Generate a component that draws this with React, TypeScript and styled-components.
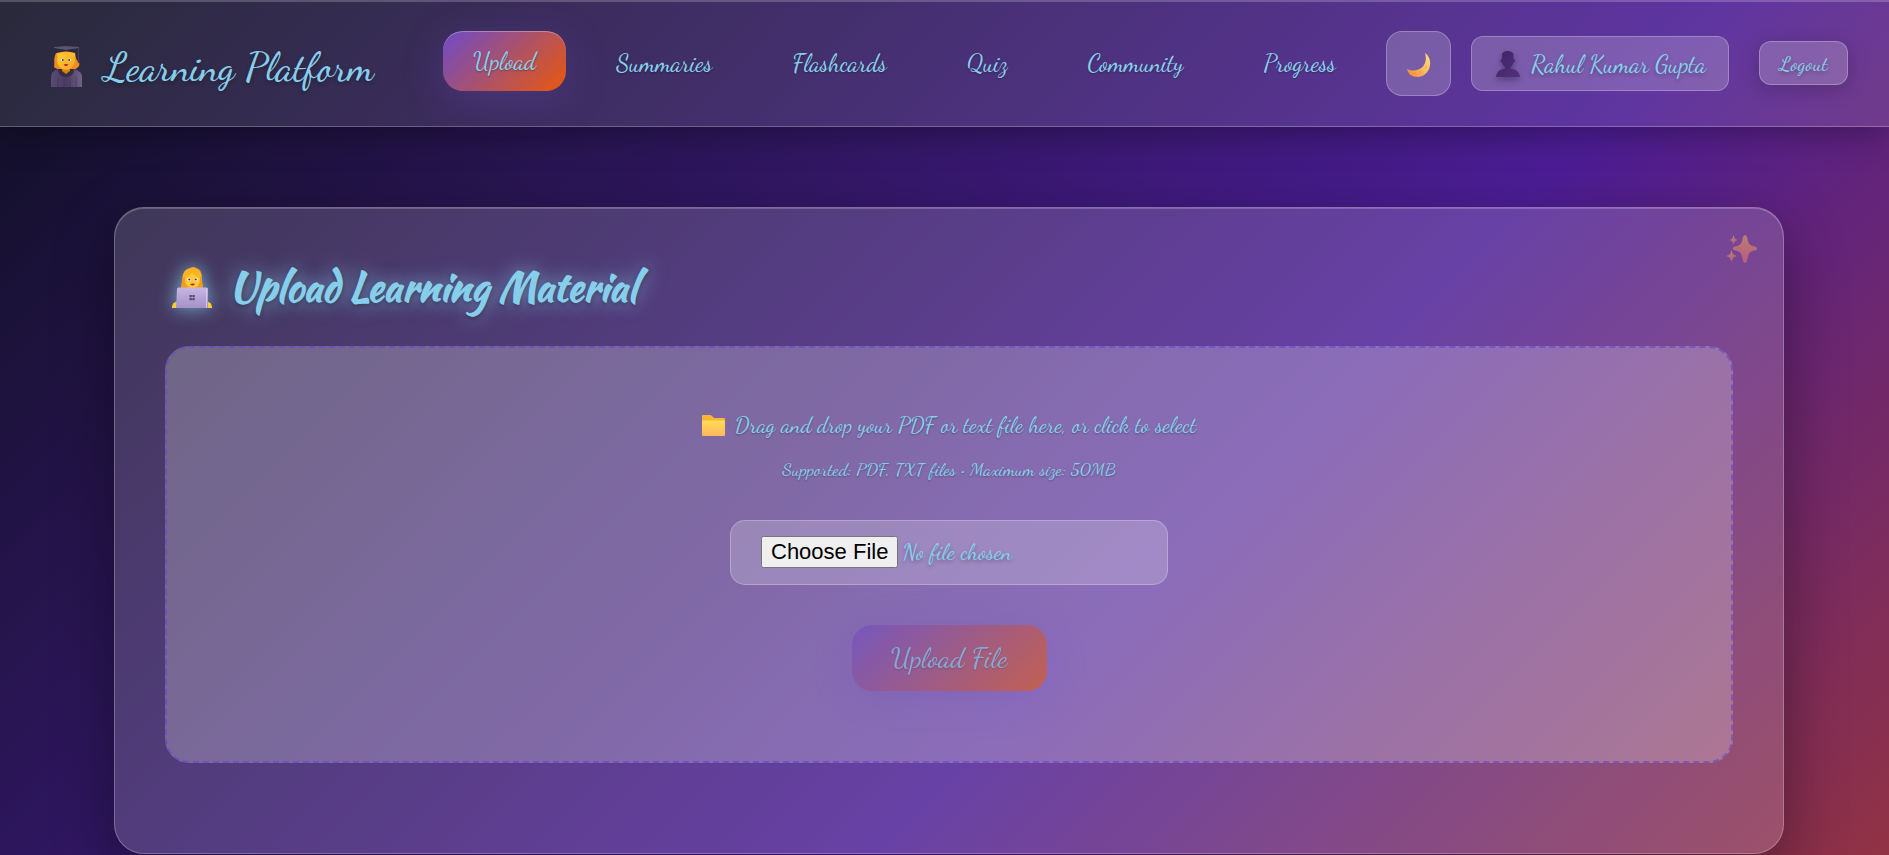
import React from 'react';
import styled, { createGlobalStyle } from 'styled-components';

const SCRIPT = '"Dancing Script", "Liberation Serif", cursive';
const BRUSH = '"Kaushan Script", "Dancing Script", "Liberation Serif", cursive';
const SKY = '#87ceeb';

const GlobalStyle = createGlobalStyle`
  *, *::before, *::after { box-sizing: border-box; }
  html { min-height: 100%; }
  body {
    margin: 0;
    min-height: 100vh;
    font-family: ${SCRIPT};
    font-weight: 500;
    color: ${SKY};
    background: linear-gradient(135deg, #0f0f23 0, #4c1d95 1220px, #c2410c 2440px) no-repeat #0f0f23;
  }
`;

const Page = styled.div`
  min-height: 100vh;
  overflow: hidden;
`;

const Header = styled.header`
  display: flex;
  align-items: center;
  height: 127px;
  padding: 0 41px 0 50px;
  background: rgba(255, 255, 255, 0.11);
  border-bottom: 1px solid rgba(255, 255, 255, 0.25);
  box-shadow: 0 8px 32px rgba(0, 0, 0, 0.3), inset 0 2px 0 rgba(255, 255, 255, 0.2);
`;

const Brand = styled.a`
  display: flex;
  align-items: center;
  gap: 22px;
  flex: 0 0 393px;
  padding-top: 8px;
  color: ${SKY};
  font-size: 40px;
  line-height: 48px;
  text-decoration: none;
  white-space: nowrap;
  text-shadow: 0 2px 4px rgba(0, 0, 0, 0.3);
`;

const Nav = styled.nav`
  display: flex;
  justify-content: space-between;
  flex: 1 1 auto;
`;

const NavLink = styled.a<{ $active?: boolean }>`
  display: flex;
  align-items: center;
  height: 60px;
  padding: 2px 30px 0;
  margin-top: ${(p) => (p.$active ? '-2px' : '0')};
  margin-bottom: ${(p) => (p.$active ? '2px' : '0')};
  border-radius: 20px;
  color: ${SKY};
  font-size: 24px;
  line-height: 30px;
  text-decoration: none;
  text-shadow: 0 1px 2px rgba(0, 0, 0, 0.3);
  background: ${(p) => (p.$active ? 'linear-gradient(135deg, #6d4bc8, #ea580c)' : 'none')};
  box-shadow: ${(p) =>
    p.$active ? '0 8px 40px rgba(109, 75, 200, 0.3), inset 0 1px 0 rgba(255, 255, 255, 0.3)' : 'none'};
`;

const Actions = styled.div`
  display: flex;
  align-items: center;
  margin-left: 20px;
`;

const glass = `
  background: rgba(255, 255, 255, 0.2);
  border: 1px solid rgba(255, 255, 255, 0.25);
  color: ${SKY};
  font-family: ${SCRIPT};
  font-weight: 500;
  text-shadow: 0 2px 4px rgba(0, 0, 0, 0.3);
`;

const ThemeButton = styled.button`
  ${glass}
  display: grid;
  place-items: center;
  width: 65px;
  height: 65px;
  padding: 4px 0 0;
  border-radius: 16px;
`;

const UserBadge = styled.div`
  ${glass}
  display: flex;
  align-items: center;
  justify-content: center;
  gap: 11px;
  width: 258px;
  height: 55px;
  margin-left: 20px;
  padding: 3px 0 0 2px;
  border-radius: 12px;
  font-size: 24px;
  line-height: 30px;
  white-space: nowrap;

  svg {
    margin-bottom: 2px;
    filter: drop-shadow(0 3px 3px rgba(0, 0, 0, 0.3));
  }
`;

const LogoutButton = styled.button`
  ${glass}
  width: 89px;
  height: 44px;
  margin-left: 30px;
  padding: 2px 0 0;
  border-radius: 12px;
  font-size: 20px;
  line-height: 24px;
  box-shadow: 0 4px 20px rgba(0, 0, 0, 0.2);
`;

const Main = styled.main`
  padding: 80px 105px 1px 114px;
`;

const Card = styled.section`
  position: relative;
  padding: 50px 50px 90px;
  border: 1px solid rgba(255, 255, 255, 0.25);
  border-radius: 30px;
  background: rgba(255, 255, 255, 0.16);
  box-shadow: 0 20px 60px rgba(0, 0, 0, 0.4), inset 0 1px 0 rgba(255, 255, 255, 0.2);
`;

const Sparkle = styled.span`
  position: absolute;
  top: 27px;
  right: 26px;
  opacity: 0.6;
`;

const Title = styled.h1`
  display: flex;
  align-items: center;
  gap: 17px;
  margin: 0 0 30px;
  padding-left: 7px;
  font-family: ${BRUSH};
  font-size: 40px;
  font-weight: 700;
  line-height: 58px;
  white-space: nowrap;
  text-shadow: 0 2px 4px rgba(0, 0, 0, 0.3), 0 0 20px rgba(135, 206, 235, 0.7);

  svg { filter: drop-shadow(0 0 9px rgba(135, 206, 235, 0.8)); }
`;

const DropZone = styled.form`
  display: flex;
  flex-direction: column;
  align-items: center;
  height: 417px;
  padding-top: 59px;
  border: 2px dashed rgba(109, 75, 200, 0.7);
  border-radius: 24px;
  background: rgba(255, 255, 255, 0.23);
`;

const Hint = styled.label`
  display: flex;
  align-items: center;
  gap: 10px;
  font-size: 22px;
  line-height: 36px;
  text-shadow: 0 1px 2px rgba(0, 0, 0, 0.3);
`;

const Limits = styled.p`
  margin: 11px 0 0;
  font-size: 18px;
  line-height: 30px;
  text-shadow: 0 1px 2px rgba(0, 0, 0, 0.3);
`;

const FileInput = styled.input`
  ${glass}
  width: 438px;
  height: 65px;
  margin-top: 36px;
  padding: 15px 30px;
  border-radius: 15px;
  font-size: 22px;
  line-height: 30px;

  &::file-selector-button {
    padding: 1px 8px;
    font-family: "Liberation Sans", Arial, sans-serif;
    font-size: 22px;
    font-weight: 400;
  }
`;

const UploadButton = styled.button`
  width: 195px;
  height: 66px;
  margin-top: 40px;
  border: 0;
  border-radius: 20px;
  background: linear-gradient(135deg, #6d4bc8, #ea580c);
  color: ${SKY};
  font-family: ${SCRIPT};
  font-size: 28px;
  font-weight: 500;
  line-height: 32px;
  text-shadow: 0 1px 2px rgba(0, 0, 0, 0.3);
  box-shadow: 0 8px 40px rgba(109, 75, 200, 0.4);

  &:disabled { opacity: 0.6; }
`;

const Graduate = () => (
  <svg width="32" height="42" viewBox="0 0 32 42" aria-hidden="true">
    <defs>
      <linearGradient id="gown" x1="0" x2="1">
        <stop offset="0" stopColor="#594b73" />
        <stop offset="0.5" stopColor="#493b62" />
        <stop offset="1" stopColor="#73618a" />
      </linearGradient>
      <linearGradient id="face" x1="0" y1="0" x2="1" y2="1">
        <stop offset="0" stopColor="#ffcf38" />
        <stop offset="1" stopColor="#f5a61d" />
      </linearGradient>
    </defs>
    <path d="M6 7C3 13 5 17 4 21c4 4 20 4 23 1 2-1 3-3 2-6-3-1-3-5-4-9z" fill="#f08b20" />
    <path d="M1 41V31c0-5 4-8 10-8h10c6 0 11 3 11 8v10z" fill="url(#gown)" />
    <path d="M8 23h16c0 5-3 8-8 8s-8-3-8-8z" fill="#372d43" />
    <path d="M12 20h8v5l-4 3-4-3z" fill="#d88012" />
    <ellipse cx="16" cy="14" rx="9" ry="10" fill="url(#face)" />
    <path d="M7 12C8 7 12 7 16 9c3-1 7-1 9 3V5H7z" fill="#ffb82b" />
    <ellipse cx="12.500" cy="14" rx="1.700" ry="1.200" fill="#fff" />
    <ellipse cx="19.500" cy="14" rx="1.700" ry="1.200" fill="#fff" />
    <circle cx="12.800" cy="14" r="1" fill="#4a2b46" />
    <circle cx="19.200" cy="14" r="1" fill="#4a2b46" />
    <path d="M13.500 18.500q2.500-1 5 0-2.500 3-5 0z" fill="#c31842" />
    <path d="M7 3h18v4q-9-3-18 0z" fill="#30283f" />
    <path d="M4 1l12-1 13 1v1L16 4 4 2z" fill="#5d5270" />
    <path d="M28.500 2v15" stroke="#4b3c5a" strokeWidth="1.2" />
    <path d="M8 32v9M14 33v8M20 33v8M26 31v10" stroke="#3c3052" opacity=".6" />
  </svg>
);

const Technologist = () => (
  <svg width="40" height="41" viewBox="0 0 40 41" aria-hidden="true">
    <defs>
      <linearGradient id="laptop" x1="0" y1="0" x2="0" y2="1">
        <stop offset="0" stopColor="#c8b6e2" />
        <stop offset="1" stopColor="#a491c9" />
      </linearGradient>
    </defs>
    <path d="M10 23c-2-4 0-6 0-11C11 4 15 2 18 1c2-1.500 5-1 6 0 5 1 6 6 6 11s2 7 0 11z" fill="#f19b22" />
    <path d="M0 41c0-5 3-7 7-6v6zM40 41c0-5-3-7-7-6v6z" fill="#ffca35" />
    <ellipse cx="20.500" cy="13" rx="7.500" ry="8.500" fill="#ffc934" />
    <path d="M11 11C11 4 14 2 18 1.500c6-2 11 2 11.500 8.500-4 0-7-1-9-4-3 3-5 4-9.500 5z" fill="#f9b324" />
    <ellipse cx="17" cy="12.500" rx="1.800" ry="1.500" fill="#fff" />
    <ellipse cx="24" cy="12.500" rx="1.800" ry="1.500" fill="#fff" />
    <circle cx="17.300" cy="12.500" r="1.100" fill="#4c3151" />
    <circle cx="23.700" cy="12.500" r="1.100" fill="#4c3151" />
    <path d="M18 17q3-1 5 0-2 3-5 0z" fill="#bd1b46" />
    <path d="M5 22q0-1.500 1.500-1.500h28Q36 20.500 36 22v19H4z" fill="url(#laptop)" />
    <path d="M34.500 21v20" stroke="#d4c5e9" />
    <path d="M17.500 28h2.300v2.300h-2.300zM20.400 28h2.300v2.300h-2.300zM17.500 31h2.300v2.300h-2.300zM20.400 31h2.300v2.300h-2.300z" fill="#57456f" />
  </svg>
);

const Moon = () => (
  <svg width="24" height="24" viewBox="0 0 24 24" aria-hidden="true">
    <defs>
      <linearGradient id="moon" x1="1" y1="0" x2="0" y2="1">
        <stop offset="0" stopColor="#ffe27c" />
        <stop offset="0.5" stopColor="#fdbb61" />
        <stop offset="1" stopColor="#f88635" />
      </linearGradient>
    </defs>
    <path d="M18 0c9 6 6 23-7 24C5 24 1 21 0 16c11 5 22-3 18-16z" fill="url(#moon)" />
    <circle cx="13" cy="19" r="1.500" fill="#e99a43" opacity=".6" />
    <circle cx="19" cy="14" r="1.200" fill="#e9a34c" opacity=".6" />
    <circle cx="8" cy="20" r="1" fill="#e8873b" opacity=".6" />
  </svg>
);

const Person = () => (
  <svg width="24" height="26" viewBox="0 0 24 26" aria-hidden="true">
    <defs>
      <linearGradient id="person" x1="0" y1="0" x2="1" y2="1">
        <stop offset="0" stopColor="#3a2562" />
        <stop offset="1" stopColor="#553080" />
      </linearGradient>
    </defs>
    <path
      d="M6 3c1-4 10-4 11.500 0v5c2 0 2 3.500 0 3.500-1 3-2 4-3 4.500v1.500c6 1 9 3.500 9.500 8.500H0c.5-5 3.500-7.500 9-8.500V16c-1-.5-2-1.500-3-4.500-2 0-2-3.500 0-3.500z"
      fill="url(#person)"
    />
  </svg>
);

const Folder = () => (
  <svg width="23" height="21" viewBox="0 0 23 21" aria-hidden="true">
    <defs>
      <linearGradient id="folder" x1="0" y1="0" x2="0" y2="1">
        <stop offset="0" stopColor="#ffdc55" />
        <stop offset="1" stopColor="#ffb75f" />
      </linearGradient>
    </defs>
    <path d="M0 1q0-1 1-1h7q1 0 2 1l2 2h10q1 0 1 1v8H0z" fill="#f9b536" />
    <path d="M0 6.500q0-1 1-1h21q1 0 1 1V20q0 1-1 1H1q-1 0-1-1z" fill="url(#folder)" />
  </svg>
);

const Sparkles = () => (
  <svg width="31" height="28" viewBox="0 0 31 28" aria-hidden="true">
    <defs>
      <linearGradient id="spark" x1="0" y1="0" x2="0" y2="1">
        <stop offset="0" stopColor="#e3a65c" />
        <stop offset="1" stopColor="#ea6a74" />
      </linearGradient>
    </defs>
    <g fill="url(#spark)">
      <path d="M19 0c1 0 2 1 2.500 4 1 5 2.500 6.500 7 7.500 3.500.5 3.500 3.500 0 4-4.500 1-6 2.500-7 8C21 26.500 20 28 19 28s-2-1.500-2.500-4.500c-1-5.500-2.500-7-7-8-3.500-.5-3.500-3.500 0-4 4.500-1 6-2.500 7-7.500C17 1 18 0 19 0z" />
      <path d="M7.500 0c1 3 1 4 4 5-3 1-3 2-4 4.500-1-2.500-1-3.500-4-4.500 3-1 3-2 4-5z" />
      <path d="M5.500 15c1 4 2 5 5.500 6-3.500 1-4.500 2-5.500 6.500C4.500 23 3.500 22 0 21c3.500-1 4.500-2 5.500-6z" />
    </g>
  </svg>
);

const LINKS = ['Upload', 'Summaries', 'Flashcards', 'Quiz', 'Community', 'Progress'];

export default function App() {
  return (
    <Page>
      <GlobalStyle />
      <Header>
        <Brand href="#home">
          <Graduate />
          <span>Learning Platform</span>
        </Brand>
        <Nav>
          {LINKS.map((name, i) => (
            <NavLink key={name} href={`#${name.toLowerCase()}`} $active={i === 0}>
              {name}
            </NavLink>
          ))}
        </Nav>
        <Actions>
          <ThemeButton type="button" aria-label="Toggle theme">
            <Moon />
          </ThemeButton>
          <UserBadge>
            <Person />
            <span>Rahul Kumar Gupta</span>
          </UserBadge>
          <LogoutButton type="button">Logout</LogoutButton>
        </Actions>
      </Header>
      <Main>
        <Card>
          <Sparkle>
            <Sparkles />
          </Sparkle>
          <Title>
            <Technologist />
            <span>Upload Learning Material</span>
          </Title>
          <DropZone>
            <Hint htmlFor="material">
              <Folder />
              <span>Drag and drop your PDF or text file here, or click to select</span>
            </Hint>
            <Limits>Supported: PDF, TXT files • Maximum size: 50MB</Limits>
            <FileInput id="material" type="file" accept=".pdf,.txt" />
            <UploadButton type="submit" disabled>
              Upload File
            </UploadButton>
          </DropZone>
        </Card>
      </Main>
    </Page>
  );
}
